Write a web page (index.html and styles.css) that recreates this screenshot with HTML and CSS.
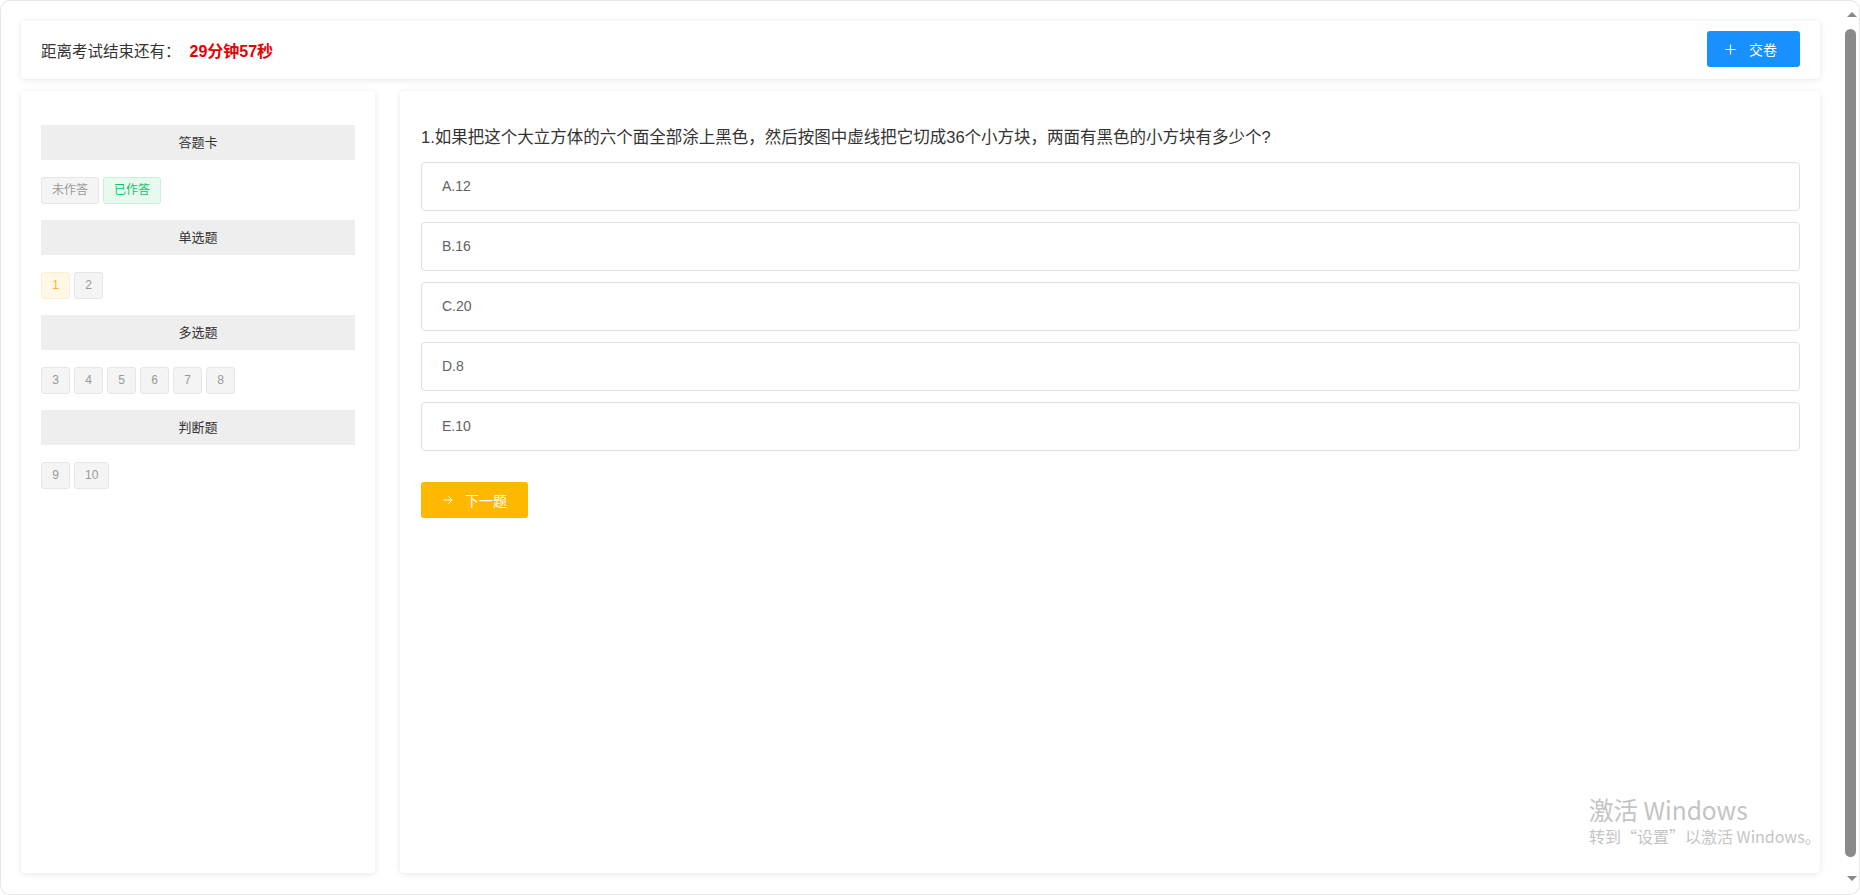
FILE: index.html
```html
<!DOCTYPE html>
<html lang="zh-CN">
<head>
<meta charset="utf-8">
<title>在线考试</title>
<link rel="stylesheet" href="styles.css">
</head>
<body>
<div class="page">
  <header class="card topbar">
    <div class="timer">
      <span class="timer-label">距离考试结束还有：</span>
      <span class="timer-value">29分钟57秒</span>
    </div>
    <button class="btn btn-blue" type="button">
      <svg class="btn-icon" viewBox="0 0 12 12" width="11" height="11"><path d="M6 0.5V11.5M0.5 6H11.5" stroke="#fff" stroke-width="1.3" fill="none"/></svg>
      <span>交卷</span>
    </button>
  </header>

  <div class="body-row">
    <aside class="card sheet">
      <div class="sheet-bar">答题卡</div>
      <div class="tag-row">
        <span class="tag tag-gray">未作答</span>
        <span class="tag tag-green">已作答</span>
      </div>
      <div class="sheet-bar">单选题</div>
      <div class="tag-row">
        <span class="tag tag-yellow">1</span>
        <span class="tag tag-gray">2</span>
      </div>
      <div class="sheet-bar">多选题</div>
      <div class="tag-row">
        <span class="tag tag-gray">3</span>
        <span class="tag tag-gray">4</span>
        <span class="tag tag-gray">5</span>
        <span class="tag tag-gray">6</span>
        <span class="tag tag-gray">7</span>
        <span class="tag tag-gray">8</span>
      </div>
      <div class="sheet-bar">判断题</div>
      <div class="tag-row">
        <span class="tag tag-gray">9</span>
        <span class="tag tag-gray">10</span>
      </div>
    </aside>

    <main class="card question">
      <p class="q-title">1.如果把这个大立方体的六个面全部涂上黑色，然后按图中虚线把它切成36个小方块，两面有黑色的小方块有多少个?</p>
      <ul class="options">
        <li class="option">A.12</li>
        <li class="option">B.16</li>
        <li class="option">C.20</li>
        <li class="option">D.8</li>
        <li class="option">E.10</li>
      </ul>
      <button class="btn btn-orange" type="button">
        <svg class="btn-icon" viewBox="0 0 12 12" width="10" height="10"><path d="M0.5 6H11M6.5 1.5L11 6L6.5 10.5" stroke="#fff" stroke-width="1.2" fill="none"/></svg>
        <span>下一题</span>
      </button>
    </main>
  </div>
</div>

<div class="watermark">
  <div class="wm-1">激活 Windows</div>
  <div class="wm-2">转到“设置”以激活 Windows。</div>
</div>

<div class="scrollbar">
  <span class="sb-up"></span>
  <span class="sb-thumb"></span>
  <span class="sb-down"></span>
</div>
<div class="frame"></div>
</body>
</html>
```
FILE: styles.css
```css
* { box-sizing: border-box; }
html, body { margin: 0; padding: 0; }
body {
  background: #fff;
  font-family: "Liberation Sans", "Noto Sans CJK SC", sans-serif;
  color: #333;
  width: 1860px;
  height: 895px;
  overflow: hidden;
}
.page {
  height: 895px;
  padding: 21px 40px 22px 21px;
  display: flex;
  flex-direction: column;
  gap: 12px;
}
.card {
  background: #fff;
  border-radius: 4px;
  box-shadow: 0 1px 6px rgba(0, 0, 0, 0.1);
}
.topbar {
  height: 58px;
  flex: none;
  display: flex;
  align-items: center;
  justify-content: space-between;
  padding: 0 20px;
}
.timer { font-size: 15.5px; display: flex; align-items: center; }
.timer-label { color: #333; }
.timer-value { color: #e60000; font-weight: bold; margin-left: 9px; font-size: 16px; }

.btn {
  display: inline-flex;
  align-items: center;
  height: 36px;
  border: none;
  border-radius: 3px;
  color: #fff;
  font-family: "Liberation Sans", "Noto Sans CJK SC", sans-serif;
  font-size: 14px;
  cursor: pointer;
}
.btn-icon { flex: none; }
.btn-blue {
  background: #1890ff;
  width: 93px;
  padding: 0 0 0 18px;
  margin-top: -2px;
}
.btn-blue .btn-icon { margin-right: 13px; }
.btn-orange {
  background: #ffb800;
  width: 107px;
  padding: 0 0 0 22px;
}
.btn-orange .btn-icon { margin-right: 12px; }

.body-row {
  flex: 1;
  display: flex;
  gap: 25px;
  min-height: 0;
}
.sheet {
  width: 354px;
  flex: none;
  padding: 34px 20px 0 20px;
}
.sheet-bar {
  height: 35px;
  line-height: 35px;
  background: #eee;
  text-align: center;
  font-size: 13px;
  color: #333;
}
.tag-row {
  display: flex;
  gap: 4px;
  margin: 17px 0 16px;
}
.tag {
  display: inline-block;
  height: 27px;
  line-height: 25px;
  padding: 0 10px;
  min-width: 29px;
  text-align: center;
  font-size: 12px;
  border: 1px solid;
  border-radius: 3px;
}
.tag-gray { background: #f4f4f5; border-color: #e6e6e6; color: #999; }
.tag-green { background: #e8f9ef; border-color: #c9f0d8; color: #19be6b; }
.tag-yellow { background: #fff8e6; border-color: #fdefcc; color: #f5b52a; }

.question {
  flex: 1;
  padding: 20px 20px 0 21px;
}
.q-title {
  margin: 14px 0 13px;
  font-size: 16.5px;
  line-height: 24px;
  color: #333;
}
.options { list-style: none; margin: 0 0 31px; padding: 0; }
.option {
  height: 49px;
  line-height: 47px;
  border: 1px solid #dcdfe6;
  border-radius: 4px;
  padding-left: 20px;
  font-size: 14px;
  color: #606266;
  margin-bottom: 11px;
}
.options .option:last-child { margin-bottom: 0; }

.watermark {
  position: absolute;
  left: 1589px;
  top: 794px;
  color: #c4c4c4;
  font-family: "Noto Sans CJK SC", sans-serif;
  pointer-events: none;
}
.wm-1 { font-size: 24.5px; line-height: 31px; }
.wm-2 { font-size: 16px; line-height: 22px; }

.scrollbar {
  position: fixed;
  top: 0;
  right: 0;
  width: 17px;
  height: 895px;
  background: #fff;
}
.sb-up, .sb-down {
  position: absolute;
  left: 4px;
  width: 0;
  height: 0;
  border-left: 5px solid transparent;
  border-right: 5px solid transparent;
}
.sb-up { top: 12px; border-bottom: 5px solid #8a8a8a; }
.sb-down { top: 876px; border-top: 5px solid #8a8a8a; }
.sb-thumb {
  position: absolute;
  left: 2px;
  top: 29px;
  width: 11px;
  height: 828px;
  border-radius: 6px;
  background: #8a8a8a;
}
.frame {
  position: fixed;
  inset: 0;
  border-radius: 10px;
  box-shadow: inset 0 0 0 1px #e8e8e8;
  pointer-events: none;
}
```
